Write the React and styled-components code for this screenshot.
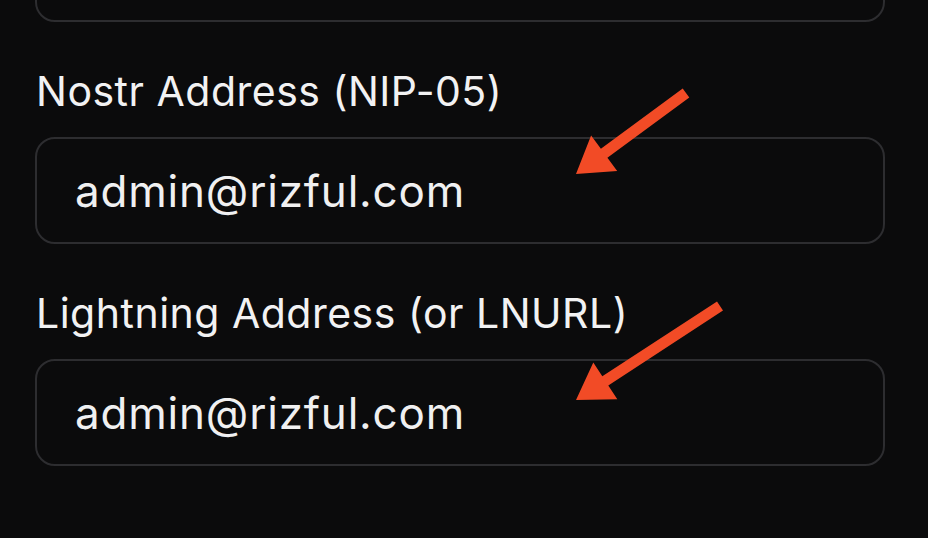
import React from 'react';
import styled, { createGlobalStyle } from 'styled-components';

const Global = createGlobalStyle`
  html, body {
    margin: 0;
    padding: 0;
    background: #0b0b0c;
  }
  body {
    font-family: Inter, "Noto Sans", "Liberation Sans", sans-serif;
    -webkit-font-smoothing: antialiased;
  }
`;

const Page = styled.div`
  width: 928px;
  height: 538px;
  overflow: hidden;
  background: #0b0b0c;
  box-sizing: border-box;
  padding: 0 43px 0 35px;
  display: flex;
  flex-direction: column;
`;

const Field = styled.div`
  position: relative;
  display: flex;
  flex-direction: column;
  margin-top: ${(p) => p.$gap || 0}px;
`;

const Label = styled.label`
  color: #f2f2f3;
  font-size: 41px;
  line-height: 48px;
  font-weight: 400;
  letter-spacing: 0.5px;
  margin-bottom: 22px;
  padding-left: 1px;
`;

const Input = styled.input`
  box-sizing: border-box;
  width: 100%;
  height: 107px;
  margin-top: ${(p) => p.$offset || 0}px;
  padding: 0 38px;
  background: #0b0b0c;
  border: 2px solid #2d2d30;
  border-radius: 20px;
  color: #f0f0f1;
  font-family: inherit;
  font-size: 44px;
  letter-spacing: 0.8px;
  outline: none;
`;

const ArrowLayer = styled.svg`
  position: absolute;
  left: -35px;
  top: 0;
  width: 928px;
  height: 140px;
  overflow: visible;
  pointer-events: none;
`;

// builds an arrow polygon from tip to tail
function arrowPoints(tip, tail, shaft = 11, headLen = 35, headW = 44) {
  const dx = tail[0] - tip[0];
  const dy = tail[1] - tip[1];
  const len = Math.hypot(dx, dy);
  const ux = dx / len;
  const uy = dy / len;
  const nx = -uy;
  const ny = ux;
  const bx = tip[0] + ux * headLen;
  const by = tip[1] + uy * headLen;
  const pts = [
    tip,
    [bx + (nx * headW) / 2, by + (ny * headW) / 2],
    [bx + (nx * shaft) / 2, by + (ny * shaft) / 2],
    [tail[0] + (nx * shaft) / 2, tail[1] + (ny * shaft) / 2],
    [tail[0] - (nx * shaft) / 2, tail[1] - (ny * shaft) / 2],
    [bx - (nx * shaft) / 2, by - (ny * shaft) / 2],
    [bx - (nx * headW) / 2, by - (ny * headW) / 2],
  ];
  return pts.map((p) => p.map((v) => v.toFixed(1)).join(',')).join(' ');
}

const Arrow = ({ tip, tail }) => (
  <ArrowLayer>
    <polygon points={arrowPoints(tip, tail)} fill="#f24b26" />
  </ArrowLayer>
);

export default function App() {
  return (
    <>
      <Global />
      <Page>
        <Input $offset={-85} readOnly value="" />
        <Field $gap={45}>
          <Label>Nostr Address (NIP-05)</Label>
          <Input readOnly value="admin@rizful.com" />
          <Arrow tip={[576, 107]} tail={[686, 26]} />
        </Field>
        <Field $gap={45}>
          <Label>Lightning Address (or LNURL)</Label>
          <Input readOnly value="admin@rizful.com" />
          <Arrow tip={[576, 111]} tail={[720, 17]} />
        </Field>
      </Page>
    </>
  );
}
